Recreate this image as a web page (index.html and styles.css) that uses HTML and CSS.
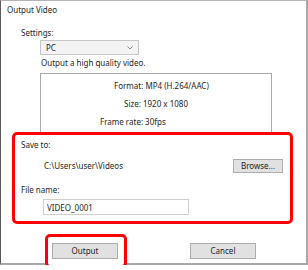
FILE: index.html
```html
<!DOCTYPE html>
<html lang="en">
<head>
    <meta charset="UTF-8">
    <title>Output Video</title>
    <link rel="stylesheet" href="styles.css">
</head>
<body>

    <div class="dialog">
        <div class="title">Output Video</div>

        <div class="label settings-label">Settings:</div>
        <div class="select">
            <span>PC</span>
            <svg class="chevron" width="6" height="4" viewBox="0 0 6 4">
                <path d="M0.5 0.5 L3 3 L5.5 0.5" fill="none" stroke="#8a8a8a" stroke-width="1"/>
            </svg>
        </div>
        <div class="desc">Output a high quality video.</div>

        <div class="info">
            <div class="info-row format-row">Format: MP4 (H.264/AAC)</div>
            <div class="info-row size-row">Size: 1920 x 1080</div>
            <div class="info-row rate-row">Frame rate: 30fps</div>
        </div>

        <div class="highlight save-box">
            <div class="label">Save to:</div>
            <div class="path-row">
                <span class="path">C:\Users\user\Videos</span>
                <button class="btn browse">Browse...</button>
            </div>
            <div class="label file-label">File name:</div>
            <input class="file-input" type="text" value="VIDEO_0001">
        </div>

        <div class="actions">
            <span class="highlight output-box">
                <button class="btn action">Output</button>
            </span>
            <button class="btn action cancel">Cancel</button>
        </div>
    </div>

</body>
</html>
```

FILE: styles.css
```css
body {
    margin: 0;
    background-color: #ffffff;
    font-family: "Noto Sans", "Open Sans", sans-serif;
    font-size: 8px;
    line-height: 12px;
    color: #1e1e1e;
}
.dialog {
    box-sizing: border-box;
    width: 308px;
    height: 265px;
    border-top: 1px solid #b4b4b4;
    border-left: 1px solid #5c5c5c;
    border-right: 2px solid #a8a8a8;
    border-bottom: 2px solid #a8a8a8;
    padding-top: 3px;
}
.title {
    padding-left: 6px;
}
.label {
    padding-left: 20px;
}
.save-box .label {
    padding-left: 6px;
}
.settings-label {
    margin-top: 11px;
}
.select {
    box-sizing: border-box;
    width: 99px;
    height: 15px;
    margin: 1px 0 0 39px;
    padding: 0 5px;
    background-color: #f3f3f3;
    border: 1px solid #c6c6c6;
    display: flex;
    align-items: center;
    justify-content: space-between;
}
.desc {
    margin: 2px 0 0 40px;
}
.info {
    box-sizing: border-box;
    width: 232px;
    height: 59px;
    margin: 4px 0 0 39px;
    padding-top: 6px;
    border: 1px solid #a9a9a9;
    border-bottom: none;
}
.info-row {
    height: 18px;
}
.format-row {
    padding-left: 73px;
}
.size-row {
    padding-left: 83px;
}
.rate-row {
    padding-left: 59px;
}
.highlight {
    border: 3px solid #ff0000;
    border-radius: 5px;
    background-color: #ffffff;
}
.save-box {
    box-sizing: border-box;
    width: 281px;
    height: 92px;
    margin-left: 11px;
    padding: 4px 7px 0 0;
}
.path-row {
    display: flex;
    align-items: center;
    height: 14px;
    margin-top: 8px;
}
.path {
    margin-left: 29px;
}
.btn {
    box-sizing: border-box;
    font-family: inherit;
    font-size: 8px;
    line-height: 12px;
    color: #1e1e1e;
    background-color: #e1e1e1;
    border: 1px solid #adadad;
    border-radius: 0;
    padding: 0;
}
.browse {
    margin-left: auto;
    width: 50px;
    height: 14px;
}
.file-label {
    margin-top: 11px;
}
.file-input {
    display: block;
    box-sizing: border-box;
    width: 146px;
    height: 16px;
    margin: 3px 0 0 28px;
    padding: 0 3px;
    font-family: inherit;
    font-size: 8px;
    color: #1e1e1e;
    border: 1px solid #cfcfcf;
    outline: none;
}
.actions {
    display: flex;
    align-items: center;
    margin-top: 10px;
}
.output-box {
    display: block;
    margin-left: 44px;
    padding: 6px 6px 6px 4px;
}
.action {
    display: block;
    width: 66px;
    height: 16px;
}
.cancel {
    margin-left: 63px;
}
```
